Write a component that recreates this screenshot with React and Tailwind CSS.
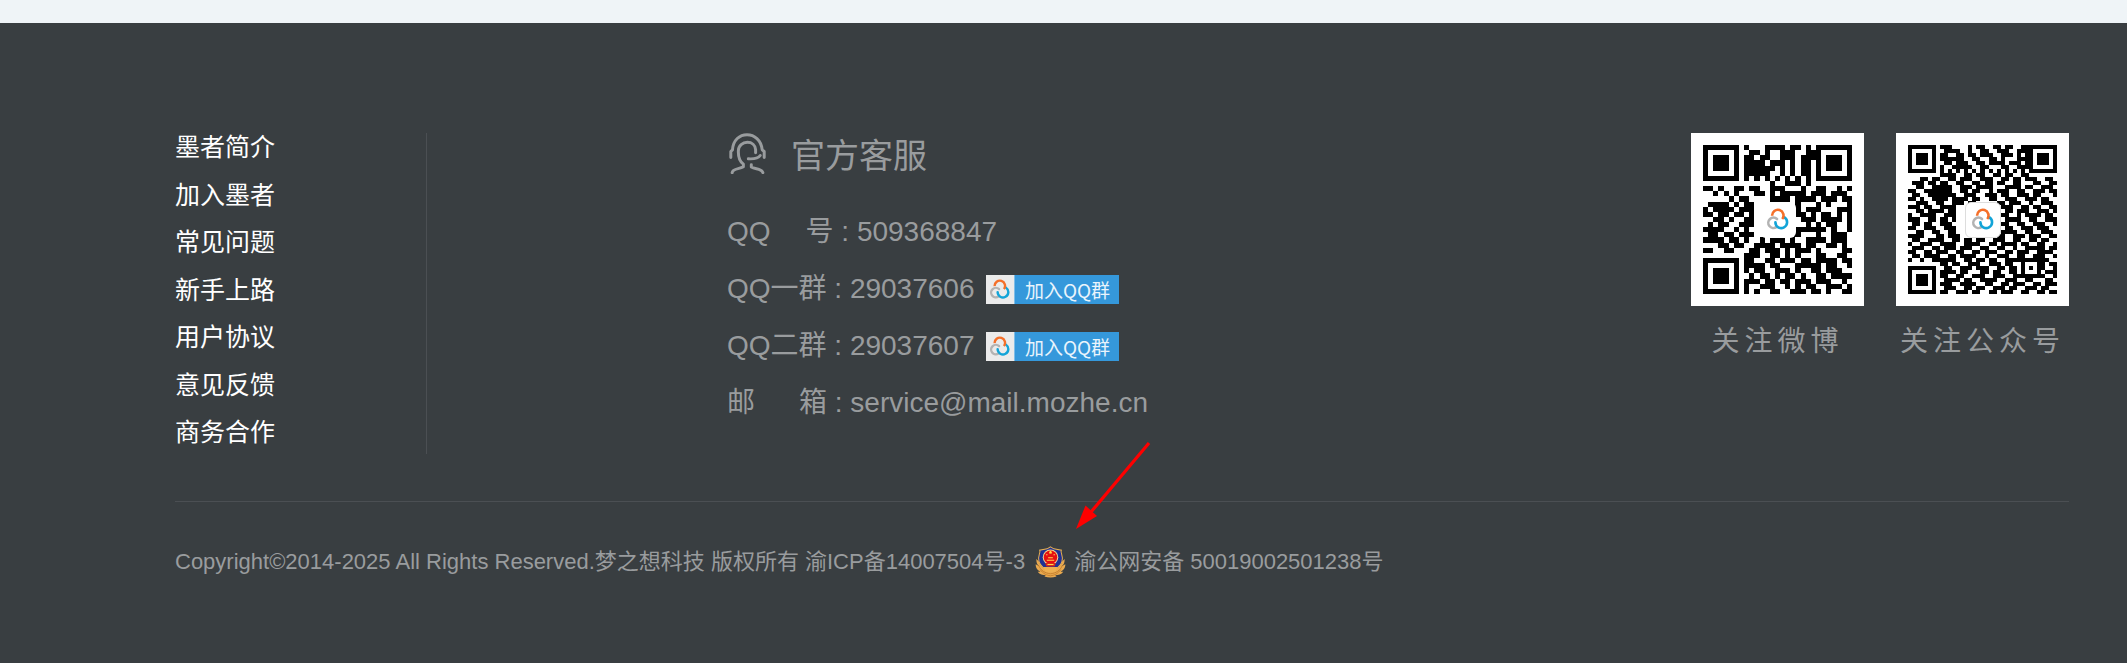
import React from "react";

const links = ["墨者简介", "加入墨者", "常见问题", "新手上路", "用户协议", "意见反馈", "商务合作"];

const weiboRows = [
  "00000000100011110110100000000",
  "00000000011010011100110000000",
  "00000000110110011101110000000",
  "00000000111101110101101000000",
  "00000000111111010101101000000",
  "00000000111110010101101000000",
  "00000000101010101010101000000",
  "00000000000001001110100000000",
  "11010011011001110001001100101",
  "00101010001101011111011101110",
  "00000101100001111011110111011",
  "01111010110000000010001010001",
  "10111101110000000010111000111",
  "11011011010000000111010110101",
  "00110100110000000101110111101",
  "01011001110000000100101011001",
  "11110010100000000011111101001",
  "01101101110000000110001001110",
  "11110110100101110100111101110",
  "00011011001111011110110011010",
  "11001100011011101011101000011",
  "00000000111001101010001100110",
  "00000000110011011101101111011",
  "00000000111101100011111011001",
  "00000000101100111010011011100",
  "00000000010110101101001101111",
  "00000000111011011011101110010",
  "00000000100111001010110011101",
  "00000000101001100111011010011",
];

const wechatRows = [
  "0000000011100001011001101100110000000",
  "0000000001111001001100111001110000000",
  "0000000011001101101110011101010000000",
  "0000000011111100110011010001110000000",
  "0000000001101110011011110111010000000",
  "0000000010011111001100011001110000000",
  "0000000010101010101010101010100000000",
  "0000000011110011011001101100110000000",
  "0001101100110111001110011011011100110",
  "0111011011001100110110110011000110011",
  "0011001111100111011110001111011001110",
  "1100111111100110110010111001100111011",
  "0110011111110011100111011001110110001",
  "1101001111011110110011001110011101100",
  "0011100110011101100000110111001001110",
  "1110110011110000000000011100110110011",
  "0011011110110000000000001101110011101",
  "1001111001110000000000011001011110110",
  "1110011011010000000000001111001100111",
  "0110110011100000000000011001100111001",
  "1100111001110000000000001100111011100",
  "0011001100110000000000011110011001110",
  "1111000110111000000000110011101110011",
  "0110011110011011011001110011001101100",
  "1001110011110011110011011110110011001",
  "0111001101110111001100110010011111011",
  "1100110111001100110111001101110011110",
  "0110111100110111100100111001100111001",
  "1001001111110011011011001111111111100",
  "0000000011011001110011101100100011011",
  "0000000001100111011100110110101011001",
  "0000000011110110001101100110100010111",
  "0000000011001100111001110011111111001",
  "0000000001111011001111001110011000110",
  "0000000011100111100110011011100110111",
  "0000000001110011011001110110011101100",
  "0000000011001110110011011100110011011",
];

function CloudMark(props) {
  return (
    <svg viewBox="0 0 74 68" fill="none" strokeWidth="8" {...props}>
      <path d="M34 34A16 16 0 1 0 32 59" stroke="#b3b3b3" strokeLinecap="round" />
      <path d="M29 44A18 18 0 1 0 57 29" stroke="#12a4d8" strokeLinecap="round" />
      <path d="M19 24A17.500 17.500 0 1 1 50 34" stroke="#f5702a" />
    </svg>
  );
}

function Finder({ x, y }) {
  return (
    <g>
      <rect x={x} y={y} width="7" height="7" fill="#000" />
      <rect x={x + 1} y={y + 1} width="5" height="5" fill="#fff" />
      <rect x={x + 2} y={y + 2} width="3" height="3" fill="#000" />
    </g>
  );
}

function QrCode({ rows, label, bordered }) {
  const n = rows.length;
  const d = rows
    .map((row, y) => [...row].map((c, x) => (c === "1" ? `M${x} ${y}h1v1h-1z` : "")).join(""))
    .join("");
  return (
    <figure className="flex flex-col items-center">
      <div className="relative size-[173px] bg-white p-3">
        <svg viewBox={`0 0 ${n} ${n}`} className="size-full" shapeRendering="crispEdges" role="img" aria-label={label}>
          <path d={d} fill="#000" />
          <Finder x={0} y={0} />
          <Finder x={n - 7} y={0} />
          <Finder x={0} y={n - 7} />
        </svg>
        <div
          className={
            "absolute inset-0 m-auto flex size-9 items-center justify-center rounded-md bg-white " +
            (bordered ? "border border-[#dddddd]" : "")
          }
        >
          <CloudMark className="w-6" />
        </div>
      </div>
      <figcaption className="mt-3.5 text-[28px] leading-[44px] tracking-[5px]">{label}</figcaption>
    </figure>
  );
}

function HeadsetIcon() {
  return (
    <svg viewBox="0 0 114 124" className="h-[41px] w-[38px]" fill="none" stroke="currentColor" strokeWidth="9" strokeLinecap="round" strokeLinejoin="round" aria-hidden="true">
      <path d="M5 74V56l5-5C12 21 32 5 54 5s43 16 46 46l6 5v18" />
      <path d="M80 60V50C79 37 69 28 55 28S28 38 28 53c-1 18 3 32 15 41v8c-12 8-32 4-34 18" />
      <path d="M58 78c16 1 29 0 36-10" />
      <path d="M67 96v7c12 7 32 4 35 17" />
    </svg>
  );
}

function JoinButton() {
  return (
    <a href="#join" className="flex h-[29px] w-[133px] text-[19px] leading-none text-[#eaf4fc]">
      <span className="flex w-7 items-center justify-center bg-[#ebebeb]">
        <CloudMark className="w-[22px]" />
      </span>
      <span className="flex flex-1 items-center justify-center border-l border-[#7dbde8] bg-[#3598db] font-['Noto_Sans_CJK_SC',sans-serif] whitespace-nowrap">
        加入QQ群
      </span>
    </a>
  );
}

function PoliceBadge() {
  return (
    <svg viewBox="0 0 92 94" className="h-8 w-[31px]" aria-hidden="true">
      <path d="M4 38c0 14 4 18 10 22L2 54c0 12 6 18 14 22l-8 0c6 8 14 10 24 10l-4 4c12 4 24 4 36 0l-4-4c10 0 18-2 24-10l-8 0c8-4 14-10 14-22l-12 6c6-4 10-8 10-22l-12 12H16z" fill="#e9a94f" />
      <path d="M10 56c8 18 20 24 36 26 16-2 28-8 36-26M16 70c8 12 18 16 30 18 12-2 22-6 30-18" fill="none" stroke="#b8701f" strokeWidth="2" />
      <path d="M46 2l10 6 22 4c-4 8 8 18 2 34-4 14-16 22-34 28C28 68 16 60 12 46 6 30 18 20 14 12l22-4z" fill="#1f3193" stroke="#e8b052" strokeWidth="3" />
      <path d="M24 62h44l-8 14H32z" fill="#eeb050" />
      <circle cx="46" cy="33" r="23" fill="#f3d58e" />
      <circle cx="46" cy="33" r="20" fill="#e60f12" />
      <path d="M44 16l2-3 2 3 3 1-2 3v3l-3-1-3 1v-3l-2-3zM33 24h4v3h-4zM55 24h4v3h-4zM39 33h14v3H39zM35 40h22v3H35z" fill="#ffd94a" />
      <path d="M30 50h32l-4 10H34z" fill="#d8281b" />
      <path d="M37 53h18v3H37z" fill="#ffd94a" />
    </svg>
  );
}

export default function App() {
  return (
    <div className="flex min-h-screen flex-col bg-[#eff4f7] pt-[23px] font-['Liberation_Sans','Noto_Sans_CJK_SC',sans-serif]">
      <footer className="flex-1 bg-[#393e41] pt-[110px] pr-[58px] pb-16 pl-[175px] text-[#999c9e]">
        <div className="flex items-start border-b border-[#4b4f53] pb-[47px]">
          <nav className="h-[321px] w-[252px] shrink-0 border-r border-[#4b4f53]">
            <ul className="-mt-[9px] flex h-[332px] flex-col justify-between">
              {links.map((t) => (
                <li key={t} className="h-[47px]">
                  <a href="#about" className="text-[25px] leading-[47px] text-white">{t}</a>
                </li>
              ))}
            </ul>
          </nav>

          <section className="ml-[300px] flex-1 whitespace-nowrap">
            <h2 className="flex h-[47px] items-start gap-6 pl-0.5">
              <HeadsetIcon />
              <span className="text-[34px] leading-[47px]">官方客服</span>
            </h2>
            <div className="mt-6 flex flex-col gap-px text-[28px] leading-[56px]">
              <p><span className="mr-[35px]">QQ</span>号 : 509368847</p>
              <div className="flex items-center gap-3"><p>QQ一群 : 29037606</p><JoinButton /></div>
              <div className="flex items-center gap-3"><p>QQ二群 : 29037607</p><JoinButton /></div>
              <p><span className="mr-[44px]">邮</span>箱 : service@mail.mozhe.cn</p>
            </div>
          </section>

          <div className="flex gap-8">
            <QrCode rows={weiboRows} label="关注微博" />
            <QrCode rows={wechatRows} label="关注公众号" bordered />
          </div>
        </div>

        <div className="mt-10 flex items-center text-[22px] leading-10 whitespace-nowrap">
          <p>
            Copyright©2014-2025 All Rights Reserved.梦之想科技 版权所有 <a href="#icp">渝ICP备14007504号-3</a>
          </p>
          <a href="#police" className="ml-2.5 flex items-center gap-2">
            <span className="relative">
              <PoliceBadge />
              <svg viewBox="0 0 78 90" className="absolute bottom-12 left-10 h-[90px] w-[78px]" aria-hidden="true">
                <path d="M74 3L16 72" stroke="#fe0000" strokeWidth="3.2" />
                <path d="M1 89l9.500-23.500 11.500 10.500z" fill="#fe0000" />
              </svg>
            </span>
            渝公网安备 50019002501238号
          </a>
        </div>
      </footer>
    </div>
  );
}
